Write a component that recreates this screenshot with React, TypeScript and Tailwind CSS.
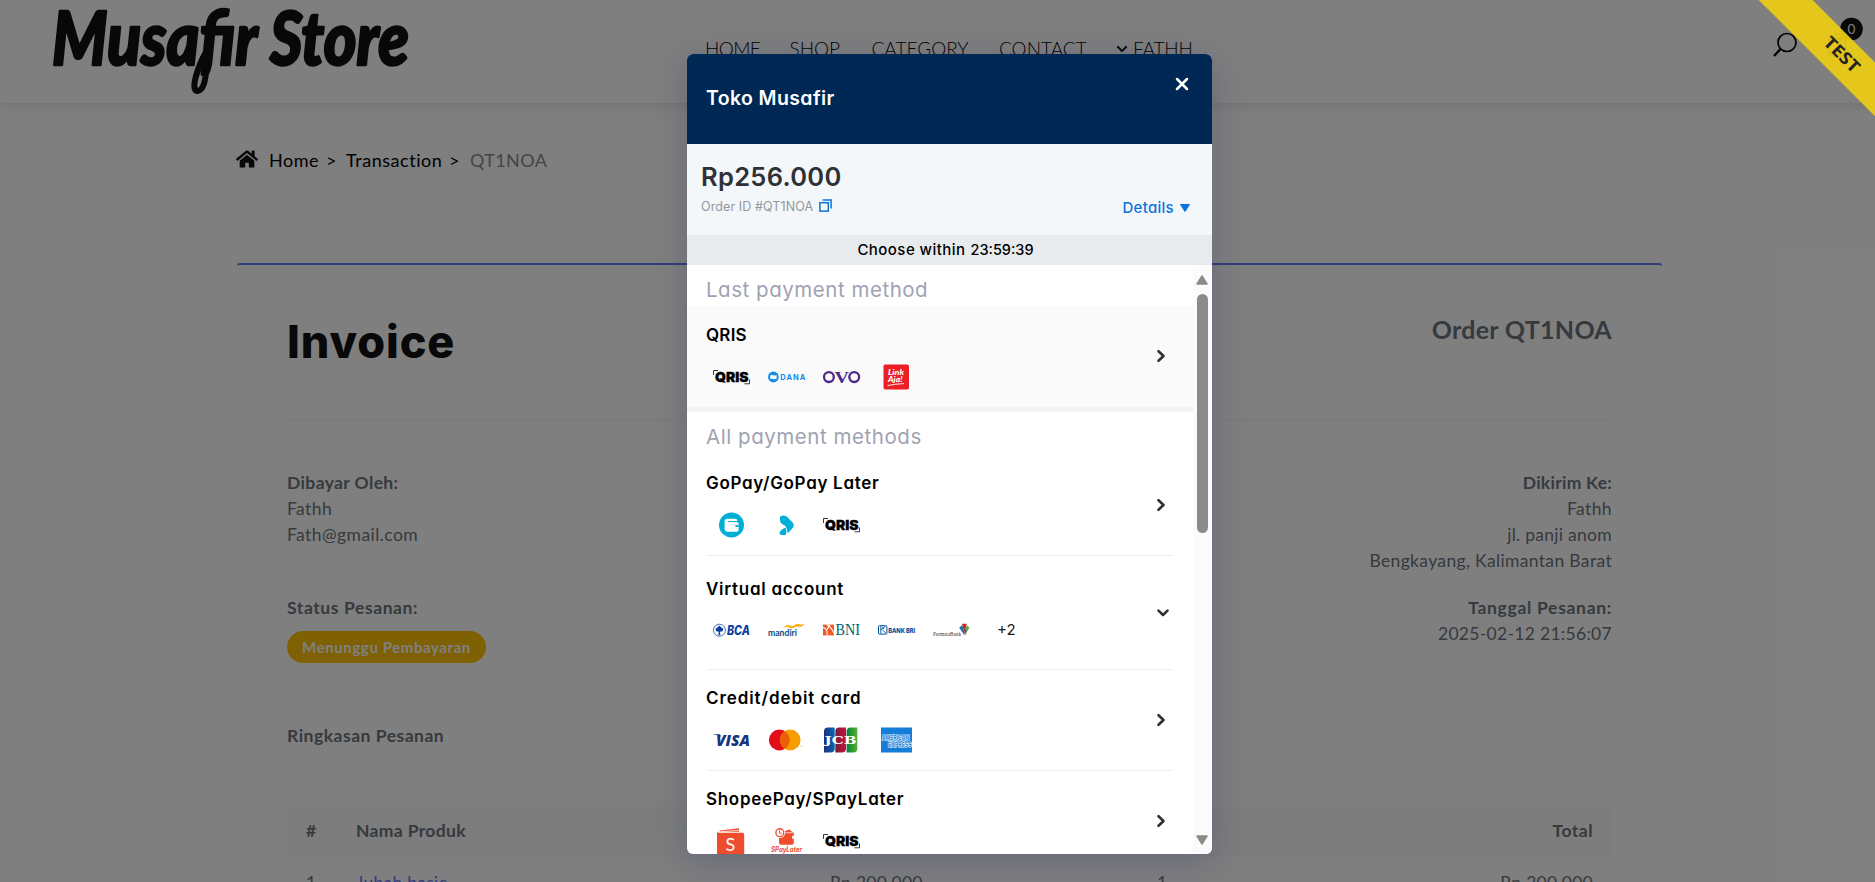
import type { ReactNode } from "react";
import { FaChevronDown, FaHome } from "react-icons/fa";

/* ---------- payment brand marks, each on a 37x26 tile ---------- */

function Tile({ children }: { children: ReactNode }) {
  return (
    <svg className="h-[26px] w-[37px] shrink-0 overflow-visible" viewBox="0 0 37 26">
      {children}
    </svg>
  );
}

function Qris() {
  return (
    <Tile>
      <path d="M0.500 11V6.500H5M36.500 15.500V19.800H31.500" fill="none" stroke="#222" strokeWidth="0.900" />
      <text x="2" y="17.800" textLength="33.500" lengthAdjust="spacingAndGlyphs" className="font-[Inter] text-[13px] font-black" fill="#000" stroke="#000" strokeWidth="0.300">
        QRIS
      </text>
    </Tile>
  );
}

function Dana() {
  return (
    <Tile>
      <circle cx="5.400" cy="13" r="5.400" fill="#118eea" />
      <path d="M2.200 11.600c2-1.300 3.400.5 6.400-.4v3.600c-2.600 1.100-4.400-.8-6.400.3z" fill="#fff" />
      <text x="12.300" y="15.800" textLength="25" className="font-[Inter] text-[7.500px] font-bold" fill="#118eea">
        DANA
      </text>
    </Tile>
  );
}

function Ovo() {
  return (
    <Tile>
      <circle cx="5.900" cy="13.100" r="4.900" fill="none" stroke="#4c2a86" strokeWidth="2.300" />
      <text x="11.500" y="18.800" textLength="14.500" lengthAdjust="spacingAndGlyphs" className="font-['Liberation_Serif'] text-[17px] font-bold" fill="#4c2a86">
        V
      </text>
      <circle cx="31.200" cy="13.100" r="4.900" fill="none" stroke="#4c2a86" strokeWidth="2.300" />
    </Tile>
  );
}

function LinkAja() {
  return (
    <Tile>
      <rect x="5.500" y="0.500" width="25.500" height="25" rx="1.800" fill="#ec1f27" />
      <text x="10" y="10.800" textLength="16" lengthAdjust="spacingAndGlyphs" className="font-[Lato] text-[8px] font-black italic" fill="#fff">
        Link
      </text>
      <text x="10" y="17.800" textLength="14.500" lengthAdjust="spacingAndGlyphs" className="font-[Lato] text-[8px] font-black italic" fill="#fff">
        Aja!
      </text>
      <path d="M9.500 21.600q8-1.800 16.500-2" fill="none" stroke="#fff" strokeWidth="0.900" />
    </Tile>
  );
}

function Gopay() {
  return (
    <Tile>
      <circle cx="18.500" cy="13" r="12.500" fill="#00aed6" />
      <path d="M14.200 6.800h7.600q2.600 0 2.600 2.200h-9.200v1h8.600q1.800 0 1.800 1.800v5.400q0 2.600-2.800 2.600h-8q-3.200 0-3.200-3v-7.400q0-2.600 2.600-2.600z" fill="#fff" />
      <path d="M25.600 12.900h-2.400q-1 0-1 1t1 1h2.400z" fill="#00aed6" />
    </Tile>
  );
}

function GopayLater() {
  return (
    <Tile>
      <path d="M12 4.800q4.500-3 7.500.4l5.600 5.800q1.600 2.200 0 4.400l-5.400 6.200q-.6-6.800-3.400-8.400-4.400-1.800-4.300-5z" fill="#00aed6" />
      <path d="M17.600 15.600q1.400 3.400.4 6.800-2.400 1.400-6.400-.2-.6-3.800 6-6.600z" fill="#00aed6" />
    </Tile>
  );
}

function Bca() {
  return (
    <Tile>
      <circle cx="6.400" cy="13.200" r="6" fill="none" stroke="#1e4aa3" strokeWidth="0.800" />
      <path d="M6.400 8.400l2 2.200 2 1.200-.8 2.400-2.600.6.400 3.400h-2l.4-3.400-2.600-.6-.8-2.400 2-1.200z" fill="#0d3f9e" />
      <text x="14" y="17.800" textLength="23" lengthAdjust="spacingAndGlyphs" className="font-[Inter] text-[12.500px] font-extrabold italic" fill="#0d3f9e">
        BCA
      </text>
    </Tile>
  );
}

function Mandiri() {
  return (
    <Tile>
      <text x="0" y="18.800" textLength="29" lengthAdjust="spacingAndGlyphs" className="font-[Lato] text-[9.500px] font-bold" fill="#0b4a80">
        mandiri
      </text>
      <path d="M15 11.200q3.600-4.400 7-2.600 2.600 1.200 5-.6 2.400-1.800 4.600-.8 2.400.8 5-.4-2.400 3.800-5.600 3-2.400-.8-4.800.8-2.600 1.400-5-.2-2.600-1.200-6.200.8z" fill="#fbb116" />
    </Tile>
  );
}

function Bni() {
  return (
    <Tile>
      <rect x="0" y="7.600" width="11" height="10.800" fill="#f15a23" />
      <path d="M0 10.500q4.500.6 4.200 7.700M3.500 7.600q4.800 2.400 7.500 8.800M7 7.600l-3 5" fill="none" stroke="#fff" strokeWidth="1.100" />
      <text x="12.600" y="18.400" textLength="24.500" lengthAdjust="spacingAndGlyphs" className="font-['Liberation_Serif'] text-[16px]" fill="#006270">
        BNI
      </text>
    </Tile>
  );
}

function Bri() {
  return (
    <Tile>
      <rect x="0.500" y="8.700" width="8.400" height="8.400" rx="1" fill="none" stroke="#00529c" strokeWidth="1" />
      <path d="M2.800 9v7.500M2.800 13l4.800-4M4.300 12.600l3.600 3.800M4.200 10q2 .4 1.500 2" fill="none" stroke="#00529c" strokeWidth="0.900" />
      <text x="10.200" y="15.500" textLength="27" lengthAdjust="spacingAndGlyphs" className="font-[Inter] text-[6.300px] font-extrabold" fill="#00529c">
        BANK BRI
      </text>
    </Tile>
  );
}

function Permata() {
  return (
    <Tile>
      <text x="0" y="18.600" textLength="28" lengthAdjust="spacingAndGlyphs" className="font-['Liberation_Serif'] text-[5.800px]" fill="#333">
        PermataBank
      </text>
      <path d="M29 6.800h4.800l-1 4.500-1.400 3-1.400-3z" fill="#d8232f" />
      <path d="M26.200 10.500l3-2.200 1.800 5.800v3.600z" fill="#1b6f9c" />
      <path d="M36.400 10.500l-2.600-2.200-1.800 5.800v4.400z" fill="#5bab3c" />
      <path d="M31 12l.5 6.500L33.500 13z" fill="#8c2c6d" />
    </Tile>
  );
}

function Visa() {
  return (
    <Tile>
      <text x="3" y="19.200" textLength="34" lengthAdjust="spacingAndGlyphs" className="font-['Open_Sans'] text-[16.500px] font-extrabold italic" fill="#16357f">
        VISA
      </text>
      <path d="M0 7.200h7l1 2.600q-3-2-8-2.200z" fill="#16357f" />
    </Tile>
  );
}

function Mastercard() {
  return (
    <Tile>
      <circle cx="11.300" cy="13" r="10.400" fill="#e30c18" />
      <circle cx="22.200" cy="13" r="10.400" fill="#f79f00" />
      <path d="M16.750 4.100a10.400 10.400 0 0 1 0 17.800a10.400 10.400 0 0 1 0-17.800z" fill="#ec5e08" />
      <rect x="32.500" y="18.800" width="2.200" height="0.900" fill="#f7b955" />
    </Tile>
  );
}

function Jcb() {
  return (
    <Tile>
      <defs>
        <linearGradient id="jcbBlue">
          <stop offset="0" stopColor="#1d2f7c" />
          <stop offset="1" stopColor="#0468b4" />
        </linearGradient>
        <linearGradient id="jcbRed">
          <stop offset="0" stopColor="#6c2338" />
          <stop offset="1" stopColor="#d8083f" />
        </linearGradient>
        <linearGradient id="jcbGreen">
          <stop offset="0" stopColor="#04803a" />
          <stop offset="1" stopColor="#55b332" />
        </linearGradient>
      </defs>
      <path d="M5 .5h6.700v21q0 4-4 4H1v-21q0-4 4-4z" fill="url(#jcbBlue)" />
      <path d="M16.300 .5H23v21q0 4-4 4h-6.700v-21q0-4 4-4z" fill="url(#jcbRed)" />
      <path d="M27.600 .5h6.700v21q0 4-4 4h-6.700v-21q0-4 4-4z" fill="url(#jcbGreen)" />
      <text x="1.500" y="17" textLength="32" lengthAdjust="spacingAndGlyphs" className="font-['DejaVu_Serif'] text-[10.500px] font-bold" fill="#fff">
        JCB
      </text>
    </Tile>
  );
}

function Amex() {
  return (
    <Tile>
      <rect x="3" y="0.500" width="31" height="25" fill="#147dd8" />
      <g className="font-[Inter] text-[6px] font-bold" fill="#147dd8" stroke="#fff" strokeWidth="1" paintOrder="stroke">
        <text x="3.800" y="12.800" textLength="27.500" lengthAdjust="spacingAndGlyphs">
          AMERICAN
        </text>
        <text x="10" y="20.300" textLength="23.500" lengthAdjust="spacingAndGlyphs">
          EXPRESS
        </text>
      </g>
    </Tile>
  );
}

function Shopee() {
  return (
    <Tile>
      <path d="M6.500 2.500L26 .2V4H7z" fill="#ee4d2d" />
      <path d="M4 3.200q0 1.600 2 1.600h23.500q1.700 0 1.700 1.800V27H4z" fill="#ee4d2d" />
      <path d="M7.500 3.600L26 2.600" stroke="#fff" strokeWidth="0.900" />
      <text x="17.500" y="23" textAnchor="middle" className="font-[Lato] text-[18px]" fill="#fff">
        S
      </text>
    </Tile>
  );
}

function SPayLater() {
  return (
    <Tile>
      <path d="M13 4.500L21.500 1.500l3 2.800h1.300v3.400h-1.600v3h1.600v4q0 2.100-2 2.100H13q-2 0-2-2V8z" fill="#ee4d2d" />
      <circle cx="11.800" cy="4.700" r="5.300" fill="#fff" />
      <circle cx="11.800" cy="4.700" r="3.900" fill="none" stroke="#ee4d2d" strokeWidth="1.400" />
      <path d="M11.500 2.300v2.900h2.300" fill="none" stroke="#ee4d2d" strokeWidth="1" />
      <path d="M16 4.900l9-.3" stroke="#fff" strokeWidth="0.700" />
      <text x="3" y="24.400" textLength="31" lengthAdjust="spacingAndGlyphs" className="font-[Inter] text-[7.200px] font-bold italic" fill="#ee4d2d">
        SPayLater
      </text>
    </Tile>
  );
}

/* ---------- payment dialog ---------- */

function Chevron({ down = false }: { down?: boolean }) {
  return down ? (
    <svg className="relative top-[3px] mr-[4px] h-[12px] w-[12px]" viewBox="0 0 12 12">
      <path d="M1.500 3.600L6 8l4.500-4.400" fill="none" stroke="#2f3136" strokeWidth="2.600" strokeLinecap="round" strokeLinejoin="round" />
    </svg>
  ) : (
    <svg className="mr-[7px] h-[14px] w-[10px]" viewBox="0 0 10 14">
      <path d="M2.500 2.200L7.500 7l-5 4.800" fill="none" stroke="#2f3136" strokeWidth="2.600" strokeLinecap="round" strokeLinejoin="round" />
    </svg>
  );
}

function Method({ title, className, down, children }: { title: string; className: string; down?: boolean; children: ReactNode }) {
  return (
    <div className={`flex shrink-0 items-center justify-between ${className}`}>
      <div>
        <div className="-ml-px text-[17px] leading-6 font-semibold text-black">{title}</div>
        <div className={`flex items-center gap-[18px] pl-[6px] tracking-normal ${down ? "mt-4" : "mt-[17px]"}`}>{children}</div>
      </div>
      <Chevron down={down} />
    </div>
  );
}

function PaymentDialog() {
  return (
    <div className="flex h-[800px] w-[525px] flex-col overflow-hidden rounded-md bg-white font-[Inter,sans-serif] shadow-[0_8px_34px_rgba(50,60,110,0.32)] [font-feature-settings:'cv11']">
      <div className="flex h-[90px] shrink-0 justify-between bg-[#002855] pr-[23px] pl-[19px]">
        <h2 className="mt-[30px] text-[19.500px] leading-7 font-semibold tracking-[0.380px] text-white">Toko Musafir</h2>
        <svg className="mt-[23px] h-[14px] w-[14px]" viewBox="0 0 14 14">
          <path d="M2 2l10 10M12 2L2 12" stroke="#fff" strokeWidth="2.500" strokeLinecap="round" />
        </svg>
      </div>
      <div className="flex h-[91px] shrink-0 justify-between bg-[#f3f7fa] pr-[22px] pl-[14px]">
        <div className="pt-[17px]">
          <div className="text-[25.500px] leading-8 font-semibold tracking-[0.300px] text-[#2f3136]">Rp256.000</div>
          <div className="mt-[5px] flex items-center text-[12.500px] leading-[18px] tracking-[0.100px] text-[#93969d]">
            Order ID #QT1NOA
            <svg className="-mt-[3px] ml-[6px] h-[13px] w-[13px]" viewBox="0 0 13 13" fill="none" stroke="#0a74dc" strokeWidth="1.500">
              <rect x="0.900" y="3.700" width="8.400" height="8.400" />
              <path d="M3.600 1h8.500v8.500" />
            </svg>
          </div>
        </div>
        <div className="mb-[15px] flex h-6 items-center self-end text-[15px] font-medium tracking-[0.300px] text-[#0a74dc]">
          Details
          <svg className="ml-[6px] h-[8px] w-[10px]" viewBox="0 0 10 8">
            <path d="M0.500 0.500h9L5 7.500z" fill="#0a74dc" stroke="#0a74dc" strokeLinejoin="round" />
          </svg>
        </div>
      </div>
      <div className="flex h-[30px] shrink-0 items-center justify-center gap-[5px] bg-[#e8ebee] pr-[8px] text-black">
        <span className="text-[15px] font-medium tracking-[0.450px]">Choose within</span>
        <span className="text-[14.500px] font-medium">23:59:39</span>
      </div>
      <div className="flex min-h-0 flex-1">
        <div className="flex w-[506px] flex-col overflow-hidden">
          <h3 className="h-[42px] shrink-0 pt-[11px] pl-[19px] text-[20.500px] leading-7 tracking-[0.530px] text-[#9fa3b1]">Last payment method</h3>
          <Method title="QRIS" className="h-[105px] border-b-[5px] border-[#f3f3f4] bg-[#fafafa] px-5 pb-[2px] tracking-[0.200px]">
            <Qris />
            <Dana />
            <Ovo />
            <LinkAja />
          </Method>
          <h3 className="shrink-0 pt-[11px] pl-[19px] text-[20.500px] leading-7 tracking-[0.550px] text-[#9fa3b1]">All payment methods</h3>
          <Method title="GoPay/GoPay Later" className="mx-5 border-b border-[#efefef] pt-5 pb-[17px] tracking-[0.690px]">
            <Gopay />
            <GopayLater />
            <Qris />
          </Method>
          <Method title="Virtual account" className="mx-5 border-b border-[#efefef] pt-[21px] pb-[26px] tracking-[0.720px]" down>
            <Bca />
            <Mandiri />
            <Bni />
            <Bri />
            <Permata />
            <span className="pl-[9px] text-[15px] text-[#1a1a1a]">+2</span>
          </Method>
          <Method title="Credit/debit card" className="mx-5 border-b border-[#efefef] pt-4 pb-[17px] tracking-[0.920px]">
            <Visa />
            <Mastercard />
            <Jcb />
            <Amex />
          </Method>
          <Method title="ShopeePay/SPayLater" className="mx-5 pt-4 tracking-[0.700px]">
            <Shopee />
            <SPayLater />
            <Qris />
          </Method>
        </div>
        <div className="flex w-[19px] flex-col items-center bg-[#fbfbfb] pt-[10px] pr-px pb-[9px]">
          <svg className="h-[10px] w-[12px]" viewBox="0 0 12 10">
            <path d="M6 1L11 9H1z" fill="#8b8b8b" stroke="#8b8b8b" strokeWidth="1.500" strokeLinejoin="round" />
          </svg>
          <div className="mt-[9px] h-[239px] w-[11px] rounded-full bg-[#8b8b8b]" />
          <svg className="mt-auto h-[10px] w-[12px]" viewBox="0 0 12 10">
            <path d="M6 9L11 1H1z" fill="#8b8b8b" stroke="#8b8b8b" strokeWidth="1.500" strokeLinejoin="round" />
          </svg>
        </div>
      </div>
    </div>
  );
}

/* ---------- store page ---------- */

function Header() {
  return (
    <header className="relative flex h-[103px] w-full bg-white shadow-[0_2px_12px_rgba(0,0,0,0.12)]">
      <svg className="h-[103px] w-[705px]" viewBox="0 0 705 103">
        <text x="52" y="65" textLength="357" lengthAdjust="spacingAndGlyphs" className="font-[Lato] text-[74px] font-black italic" fill="#111" stroke="#111" strokeWidth="2.500" strokeLinejoin="round">
          Musafir Store
        </text>
        <path d="M206 52C198 66 190 90 197 91C205 91 207 74 206 56" fill="none" stroke="#111" strokeWidth="6" strokeLinecap="round" strokeLinejoin="round" />
      </svg>
      <nav className="flex items-start pt-[37px] text-[19px] leading-6 font-light text-black">
        <a className="w-[84.500px] tracking-[-0.600px]">HOME</a>
        <a className="w-[82px]">SHOP</a>
        <a className="w-[127.500px]">CATEGORY</a>
        <a className="w-[117px]">CONTACT</a>
        <a className="flex items-center gap-[5px] tracking-[-0.150px]">
          <FaChevronDown className="h-[12px] w-[12px]" />
          FATHH
        </a>
      </nav>
      <svg className="absolute top-0 right-0 h-[103px] w-[120px]" viewBox="0 0 120 103">
        <circle cx="32" cy="42.500" r="9" fill="none" stroke="#000" strokeWidth="1.700" />
        <path d="M25.500 49L19 56" stroke="#000" strokeWidth="2.400" />
        <path d="M74 38.500h16.500v17H74zM78.500 42v-4q0-4 3.800-4t3.800 4v4" fill="none" stroke="#000" strokeWidth="1.400" />
        <circle cx="96.500" cy="29" r="11.300" fill="#111" />
        <text x="96.500" y="33.800" textAnchor="middle" className="font-[Lato] text-[13.500px]" fill="#fff">
          0
        </text>
      </svg>
    </header>
  );
}

function Invoice() {
  return (
    <section className="mr-[213px] ml-[237px] h-[640px] rounded-[3px] border-t-2 border-[#6777ef] bg-white px-[50px] text-[17.500px] leading-[26px] text-[#6c757d] shadow-[0_4px_8px_rgba(0,0,0,0.03)]">
      <div className="flex h-[155px] justify-between border-b border-[#f5f5f5]">
        <h1 className="mt-[50px] font-[Inter] text-[45px] leading-[54px] font-extrabold tracking-[0.900px] text-[#111]">Invoice</h1>
        <h2 className="mt-[49px] text-[25px] leading-[30px] font-bold tracking-[0.300px]">Order QT1NOA</h2>
      </div>
      <div className="flex h-[302px] justify-between pt-[50px]">
        <div>
          <div className="font-bold tracking-[0.380px]">Dibayar Oleh:</div>
          <div className="tracking-[0.400px]">Fathh</div>
          <div className="tracking-[0.430px]">Fath@gmail.com</div>
          <div className="mt-[47px] font-bold tracking-[0.590px]">Status Pesanan:</div>
          <div className="mt-[10px] flex h-8 w-[199px] items-center justify-center rounded-full bg-[#ffc107] text-[15px] font-bold tracking-[0.590px] text-white">Menunggu Pembayaran</div>
        </div>
        <div className="text-right">
          <div className="font-bold tracking-[0.250px]">Dikirim Ke:</div>
          <div className="tracking-[0.400px]">Fathh</div>
          <div className="tracking-[0.280px]">jl. panji anom</div>
          <div className="tracking-[0.340px]">Bengkayang, Kalimantan Barat</div>
          <div className="mt-[21px] font-bold tracking-[0.690px]">Tanggal Pesanan:</div>
          <div className="tracking-[0.300px]">2025-02-12 21:56:07</div>
        </div>
      </div>
      <h3 className="h-[84px] pt-px font-bold tracking-[0.510px]">Ringkasan Pesanan</h3>
      <div className="flex h-[51px] items-center bg-[#fafafa] px-[19px] pb-px font-bold">
        <span className="w-[50px]">#</span>
        <span className="flex-1 tracking-[0.350px]">Nama Produk</span>
        <span className="tracking-[0.500px]">Total</span>
      </div>
      <div className="flex px-[19px] pt-[13px] tracking-[0.260px]">
        <span className="w-[50px]">1</span>
        <span className="w-[474px] text-[#6777ef]">Jubah basic</span>
        <span className="w-[327px]">Rp 200.000</span>
        <span className="flex-1">1</span>
        <span>Rp 200.000</span>
      </div>
    </section>
  );
}

export default function App() {
  return (
    <div className="relative h-[882px] w-[1875px] overflow-hidden bg-white font-[Lato,sans-serif] text-black">
      <Header />
      <div className="flex h-[160px] items-start pt-[45px] pl-[236px] text-[18px] leading-6">
        <FaHome className="mt-px mr-[11px] h-[20px] w-[22px] text-[#111]" />
        <span className="w-[57px] tracking-[0.500px] whitespace-nowrap">Home</span>
        <span className="w-[20px]">&gt;</span>
        <span className="w-[103px] tracking-[0.550px]">Transaction</span>
        <span className="w-[21px]">&gt;</span>
        <span className="tracking-[0.400px] text-[#8a8a8a]">QT1NOA</span>
      </div>
      <Invoice />
      <div className="absolute inset-0 flex bg-black/50 pt-[54px] pl-[687px]">
        <PaymentDialog />
      </div>
      <svg className="absolute top-0 right-0 h-[120px] w-[120px]" viewBox="0 0 120 120">
        <path d="M3.700 0H57.500L120 62.500V116.300z" fill="#edcb13" fillOpacity="0.930" />
        <text x="0" y="0" transform="translate(87 54.500) rotate(45) translate(0 6)" textAnchor="middle" textLength="43" lengthAdjust="spacingAndGlyphs" className="font-['Open_Sans'] text-[17px] font-bold" fill="#222">
          TEST
        </text>
      </svg>
    </div>
  );
}
